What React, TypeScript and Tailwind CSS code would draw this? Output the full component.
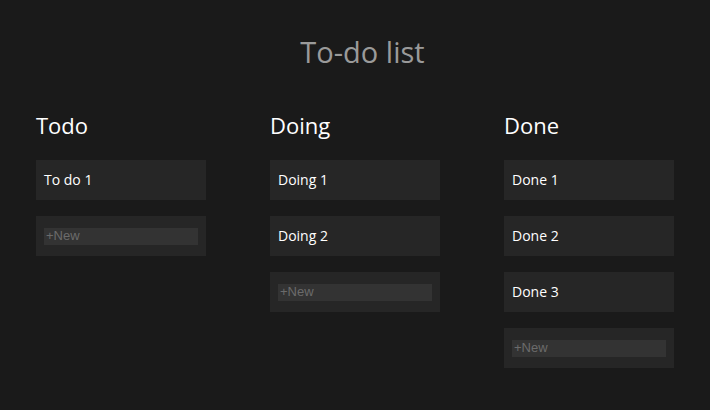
const columns = [
  { title: "Todo", items: ["To do 1"] },
  { title: "Doing", items: ["Doing 1", "Doing 2"] },
  { title: "Done", items: ["Done 1", "Done 2", "Done 3"] },
];

export default function App() {
  return (
    <div className="min-h-[410px] w-full bg-[#1a1a1a] font-['Open_Sans',sans-serif]">
      <h1 className="pl-[15px] pt-[32px] text-center text-[29px] leading-[40px] text-[#9a9a9a]">To-do list</h1>
      <div className="mt-[39px] flex justify-center gap-[64px]">
        {columns.map((col) => (
          <div key={col.title} className="w-[170px]">
            <h2 className="text-[22px] leading-[28px] text-white">{col.title}</h2>
            <div className="mt-[21px] flex flex-col gap-[16px]">
              {col.items.map((item) => (
                <div key={item} className="flex h-[40px] items-center bg-[#262626] px-[8px] pb-[1px] text-[14px] font-medium text-white">
                  {item}
                </div>
              ))}
              <div className="flex h-[40px] items-center bg-[#262626] px-[8px]">
                <input
                  placeholder="+New"
                  className="h-[17px] w-full bg-[#333333] px-[2px] font-['Liberation_Sans',sans-serif] text-[13px] text-white outline-none placeholder:text-[#6b6b6b]"
                />
              </div>
            </div>
          </div>
        ))}
      </div>
    </div>
  );
}
